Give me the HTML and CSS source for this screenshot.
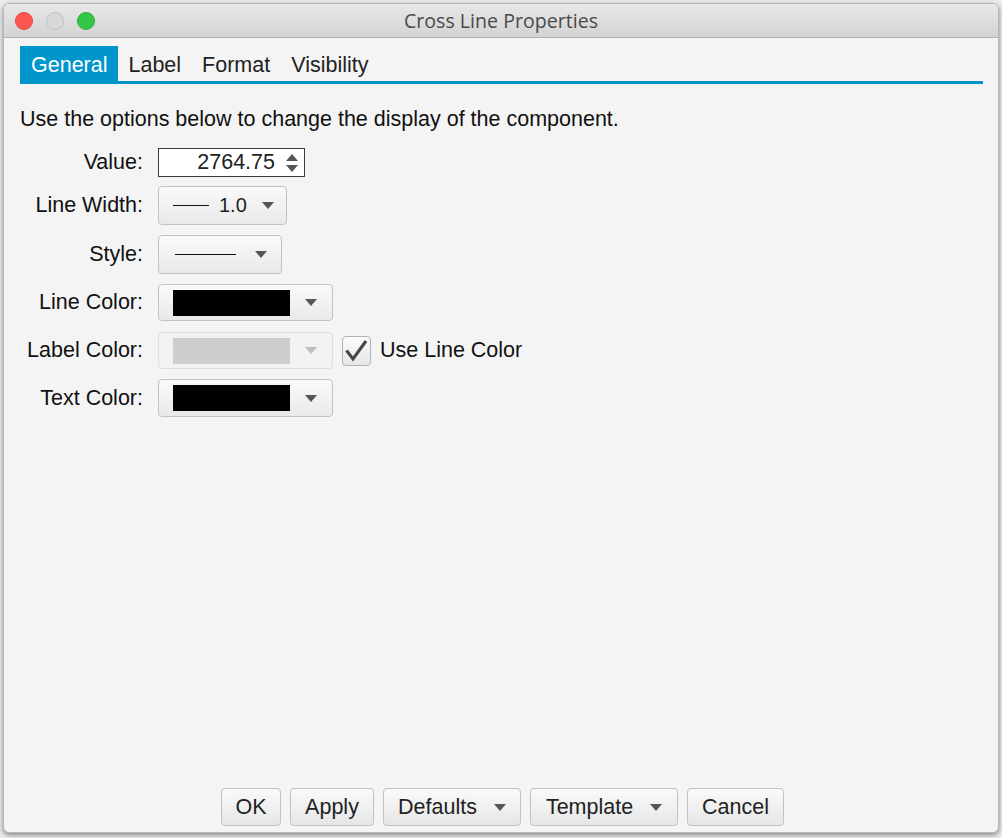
FILE: index.html
```html
<!DOCTYPE html>
<html>
<head>
<meta charset="utf-8">
<link rel="stylesheet" href="styles.css">
</head>
<body>
<div class="window">
  <div class="titlebar">
    <div class="lights">
      <span class="light red"></span>
      <span class="light gray"></span>
      <span class="light green"></span>
    </div>
    <div class="title">Cross Line Properties</div>
  </div>
  <div class="content">
    <div class="tabs">
      <div class="tab active">General</div>
      <div class="tab">Label</div>
      <div class="tab">Format</div>
      <div class="tab">Visibility</div>
    </div>
    <p class="desc">Use the options below to change the display of the component.</p>
    <div class="form">
      <div class="row r-value">
        <label class="lbl">Value:</label>
        <div class="spinner">
          <span class="num">2764.75</span>
          <svg class="spin" width="14" height="22" viewBox="0 0 14 22"><path d="M7 2 L13 9 L1 9 Z" fill="#555"/><path d="M1 13 L13 13 L7 20 Z" fill="#555"/></svg>
        </div>
      </div>
      <div class="row r-width">
        <label class="lbl">Line Width:</label>
        <div class="combo c-width">
          <span class="hline short"></span>
          <span class="ctext">1.0</span>
          <span class="arrow"></span>
        </div>
      </div>
      <div class="row r-style">
        <label class="lbl">Style:</label>
        <div class="combo c-style">
          <span class="hline long"></span>
          <span class="arrow"></span>
        </div>
      </div>
      <div class="row r-color">
        <label class="lbl">Line Color:</label>
        <div class="combo c-color">
          <span class="swatch"></span>
          <span class="arrow"></span>
        </div>
      </div>
      <div class="row r-color2">
        <label class="lbl">Label Color:</label>
        <div class="combo c-color disabled">
          <span class="swatch"></span>
          <span class="arrow"></span>
        </div>
        <div class="check">
          <svg width="27" height="28" viewBox="0 0 27 28"><path d="M3.5 13.5 L10 22 L23 4" fill="none" stroke="#454545" stroke-width="3" stroke-linejoin="miter"/></svg>
        </div>
        <span class="checklbl">Use Line Color</span>
      </div>
      <div class="row r-color3">
        <label class="lbl">Text Color:</label>
        <div class="combo c-color">
          <span class="swatch"></span>
          <span class="arrow"></span>
        </div>
      </div>
    </div>
    <div class="buttons">
      <button class="btn b-ok">OK</button>
      <button class="btn b-apply">Apply</button>
      <button class="btn b-def">Defaults <span class="arrow"></span></button>
      <button class="btn b-tpl">Template <span class="arrow"></span></button>
      <button class="btn b-cancel">Cancel</button>
    </div>
  </div>
</div>
</body>
</html>
```
FILE: styles.css
```css
html, body {
  margin: 0;
  padding: 0;
}
body {
  width: 1002px;
  height: 838px;
  background: #ececec;
  padding: 3px 3px 0 3px;
  box-sizing: border-box;
  font-family: "Liberation Sans", Arial, sans-serif;
  overflow: hidden;
}
.window {
  width: 996px;
  height: 830px;
  border: 1px solid #b8b8b8;
  border-radius: 6px;
  box-sizing: border-box;
  background: #f4f4f4;
  box-shadow: 0 2px 5px rgba(0,0,0,0.45);
  display: flex;
  flex-direction: column;
  overflow: hidden;
}
.titlebar {
  height: 34px;
  flex: none;
  box-sizing: border-box;
  background: linear-gradient(#e8e8e8, #d3d3d3);
  border-bottom: 1px solid #b3b3b3;
  display: flex;
  align-items: center;
  position: relative;
}
.lights {
  display: flex;
  gap: 13px;
  padding-left: 11px;
  position: relative;
  z-index: 1;
}
.light {
  width: 18px;
  height: 18px;
  border-radius: 50%;
  box-sizing: border-box;
}
.light.red { background: #fc5753; border: 1px solid #e0443f; }
.light.gray { background: #d8d8d8; border: 1px solid #c2c2c2; }
.light.green { background: #33c748; border: 1px solid #2aad3d; }
.title {
  position: absolute;
  left: 0;
  right: 0;
  text-align: center;
  font-size: 19.6px;
  color: #4a4a4a;
  font-family: "Open Sans", "Liberation Sans", sans-serif;
}
.content {
  flex: 1;
  display: flex;
  flex-direction: column;
  padding: 8px 15px 0 16px;
}
.tabs {
  display: flex;
  border-bottom: 3px solid #0093c9;
  height: 35px;
}
.tab {
  font-size: 21.5px;
  color: #222;
  padding: 0 10.5px;
  line-height: 39px;
  height: 35px;
}
.tab.active {
  background: #0096cb;
  color: #fff;
  padding-left: 11px;
}
.desc {
  margin: 20px 0 0 0;
  font-size: 21.5px;
  line-height: 30px;
  color: #111;
}
.form {
  display: flex;
  flex-direction: column;
  margin-top: 14px;
}
.row {
  display: flex;
  align-items: center;
}
.lbl {
  width: 123px;
  text-align: right;
  font-size: 21.5px;
  color: #111;
  margin-right: 15px;
  flex: none;
  white-space: nowrap;
}
.spinner {
  width: 147px;
  height: 29px;
  box-sizing: border-box;
  border: 1px solid #3a3a3a;
  background: #fff;
  display: flex;
  align-items: center;
  justify-content: flex-end;
  padding-right: 5px;
  font-size: 21.5px;
  color: #222;
}
.num { margin-right: 10px; }
.combo {
  box-sizing: border-box;
  border: 1px solid #c2c2c2;
  border-radius: 4px;
  background: linear-gradient(#fafafa, #e9e9e9);
  display: flex;
  align-items: center;
  position: relative;
}
.arrow {
  display: inline-block;
  width: 0;
  height: 0;
  border-left: 6px solid transparent;
  border-right: 6px solid transparent;
  border-top: 7px solid #555;
}
.r-width { margin-top: 9px; }
.c-width {
  width: 129px;
  height: 39px;
  padding-left: 14px;
}
.hline {
  display: inline-block;
  height: 1.5px;
  background: #111;
}
.hline.short { width: 36px; }
.hline.long { width: 61px; }
.ctext {
  font-size: 20px;
  color: #222;
  margin-left: 10px;
  margin-right: 15px;
}
.r-style { margin-top: 10px; }
.c-style {
  width: 124px;
  height: 39px;
  padding-left: 16px;
}
.c-style .arrow { margin-left: 19px; }
.r-color { margin-top: 10px; }
.c-color {
  width: 175px;
  height: 37px;
  padding-left: 14px;
}
.swatch {
  width: 117px;
  height: 26px;
  background: #000;
}
.c-color .arrow { margin-left: 15px; }
.r-color2 { margin-top: 11px; }
.r-color3 { margin-top: 10px; }
.r-color3 .c-color { height: 38px; }
.combo.disabled {
  border-color: #dedede;
  background: #f2f2f2;
}
.combo.disabled .swatch { background: #cdcdcd; }
.combo.disabled .arrow { border-top-color: #bdbdbd; }
.check {
  width: 29px;
  height: 30px;
  box-sizing: border-box;
  border: 1px solid #b2b2b2;
  border-radius: 4px;
  background: linear-gradient(#fbfbfb, #e6e6e6);
  margin-left: 9px;
  display: flex;
  align-items: center;
  justify-content: center;
}
.checklbl {
  font-size: 21.5px;
  color: #111;
  margin-left: 9px;
}
.buttons {
  margin-top: auto;
  margin-bottom: 6px;
  display: flex;
  justify-content: center;
  gap: 9px;
  padding-left: 2px;
}
.btn {
  height: 38px;
  box-sizing: border-box;
  border: 1px solid #c2c2c2;
  border-radius: 4px;
  background: linear-gradient(#fafafa, #e6e6e6);
  font-family: "Liberation Sans", Arial, sans-serif;
  font-size: 21.5px;
  color: #222;
  display: flex;
  align-items: center;
  justify-content: center;
  padding: 0;
}
.btn .arrow { margin-left: 17px; }
.b-ok { width: 60px; }
.b-apply { width: 84px; }
.b-def { width: 138px; }
.b-tpl { width: 148px; }
.b-cancel { width: 97px; }
```
